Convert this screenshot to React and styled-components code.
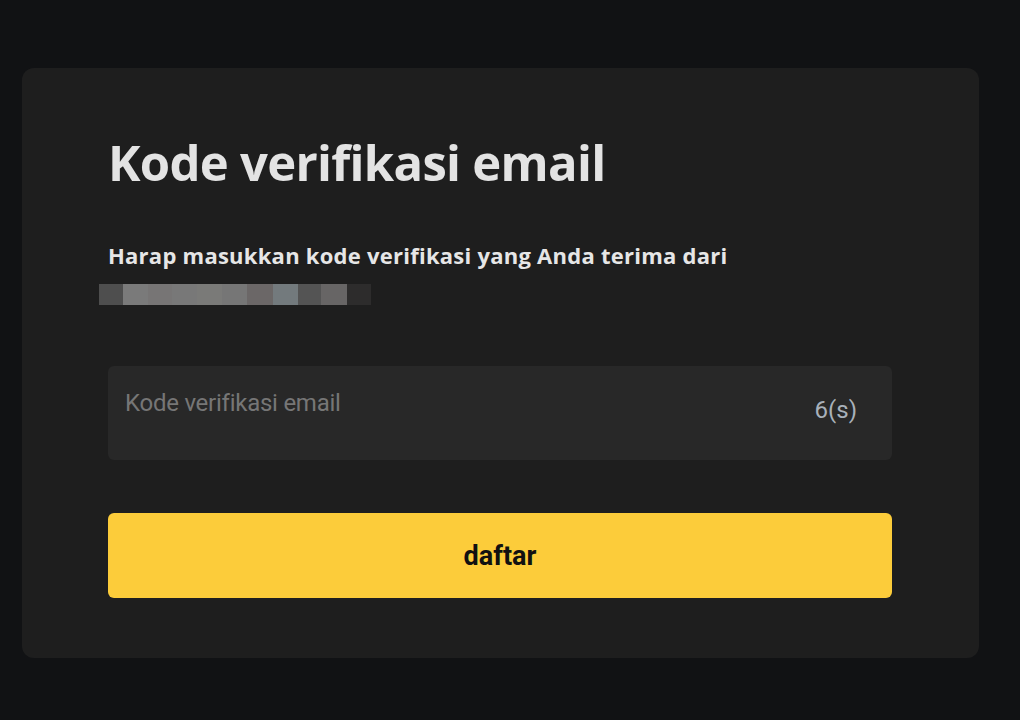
import React from 'react'
import styled, { createGlobalStyle } from 'styled-components'

const GlobalStyle = createGlobalStyle`
  body {
    margin: 0;
    background: #111214;
    font-family: "Open Sans", "Liberation Sans", sans-serif;
  }
`

const Page = styled.div`
  min-height: 720px;
  padding: 68px 41px 0 22px;
  box-sizing: border-box;
`

const Card = styled.div`
  background: #1e1e1e;
  border-radius: 12px;
  height: 590px;
  box-sizing: border-box;
  padding: 70px 87px 0 86px;
  display: flex;
  flex-direction: column;
`

const Title = styled.h1`
  margin: 0;
  font-size: 49px;
  font-weight: 700;
  line-height: 49px;
  color: #e3e3e3;
  letter-spacing: -0.7px;
`

const Subtitle = styled.p`
  margin: 57px 0 0;
  font-size: 22px;
  font-weight: 700;
  line-height: 22px;
  color: #e6e6e6;
  letter-spacing: 0.25px;
`

const Blur = styled.div`
  display: flex;
  margin: 18px 0 0 -9px;
  height: 21px;
`

const Pixel = styled.span`
  width: ${(p) => p.w}px;
  background: ${(p) => p.c};
`

const Field = styled.div`
  margin-top: 61px;
  height: 94px;
  background: #282828;
  border-radius: 6px;
  display: flex;
  justify-content: space-between;
  align-items: flex-start;
  padding: 25px 35px 0 17px;
  box-sizing: border-box;
  font-family: Roboto, "Liberation Sans", sans-serif;
  line-height: 24px;
`

const Placeholder = styled.span`
  font-size: 24px;
  color: #767676;
  letter-spacing: -0.25px;
`

const Timer = styled.span`
  font-size: 24px;
  color: #a8b1ba;
  margin-top: 7px;
`

const Button = styled.button`
  margin-top: 53px;
  height: 85px;
  border: none;
  border-radius: 6px;
  background: #fccc3a;
  color: #111;
  font-family: Roboto, "Liberation Sans", sans-serif;
  font-size: 27px;
  font-weight: 700;
  cursor: pointer;
`

const pixels = [
  ['#4e4e4e', 24],
  ['#7a7a7a', 25],
  ['#777575', 24],
  ['#787878', 25],
  ['#7a7a78', 25],
  ['#767676', 25],
  ['#6b6767', 26],
  ['#737a7d', 25],
  ['#545454', 23],
  ['#676565', 26],
  ['#2d2c2c', 24],
]

export default function App() {
  return (
    <>
      <GlobalStyle />
      <Page>
        <Card>
          <Title>Kode verifikasi email</Title>
          <Subtitle>Harap masukkan kode verifikasi yang Anda terima dari</Subtitle>
          <Blur>
            {pixels.map(([c, w], i) => (
              <Pixel key={i} c={c} w={w} />
            ))}
          </Blur>
          <Field>
            <Placeholder>Kode verifikasi email</Placeholder>
            <Timer>6(s)</Timer>
          </Field>
          <Button>daftar</Button>
        </Card>
      </Page>
    </>
  )
}
